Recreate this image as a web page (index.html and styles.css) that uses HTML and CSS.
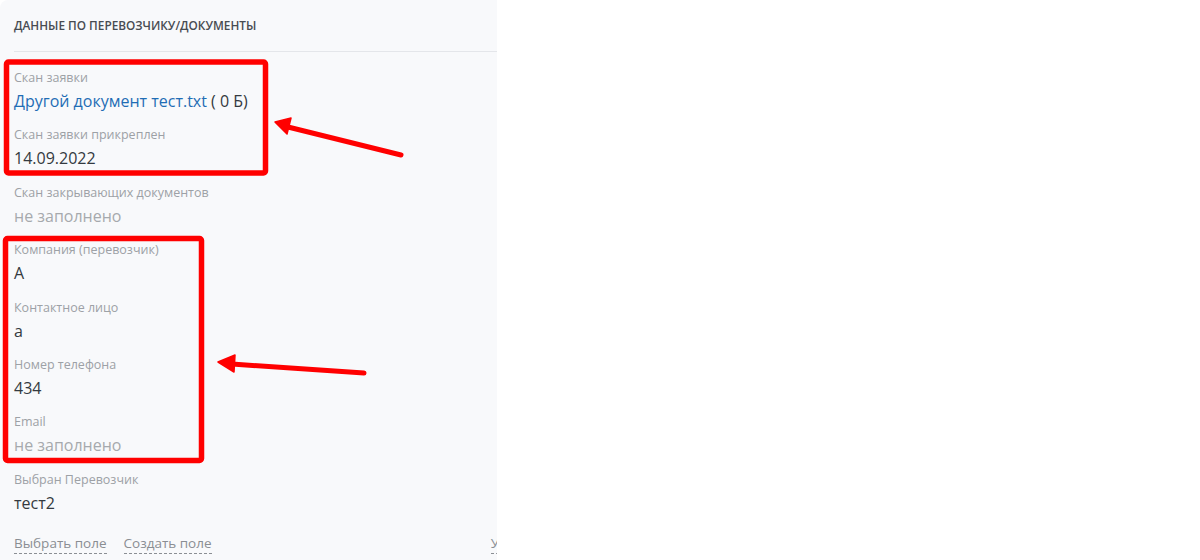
FILE: index.html
```html
<!DOCTYPE html>
<html>
<head>
	<meta charset="UTF-8">
	<title>Данные по перевозчику</title>
	<link rel="stylesheet" href="styles.css">
</head>
<body>
<div class="panel">
	<div class="header">Данные по перевозчику/документы</div>
	<div class="fields">
		<div class="field">
			<div class="label">Скан заявки</div>
			<div class="value"><a class="file">Другой документ тест.txt</a> ( 0 Б)</div>
		</div>
		<div class="field">
			<div class="label">Скан заявки прикреплен</div>
			<div class="value">14.09.2022</div>
		</div>
		<div class="field">
			<div class="label">Скан закрывающих документов</div>
			<div class="value empty">не заполнено</div>
		</div>
		<div class="field">
			<div class="label">Компания (перевозчик)</div>
			<div class="value">А</div>
		</div>
		<div class="field">
			<div class="label">Контактное лицо</div>
			<div class="value">а</div>
		</div>
		<div class="field">
			<div class="label">Номер телефона</div>
			<div class="value">434</div>
		</div>
		<div class="field">
			<div class="label">Email</div>
			<div class="value empty">не заполнено</div>
		</div>
		<div class="field">
			<div class="label">Выбран Перевозчик</div>
			<div class="value">тест2</div>
		</div>
	</div>
	<div class="actions">
		<a class="action">Выбрать поле</a>
		<a class="action">Создать поле</a>
		<a class="action right">Удалить</a>
	</div>
</div>
<svg class="marks" width="1200" height="560" viewBox="0 0 1200 560">
	<g fill="none" stroke="#ff0000" stroke-width="5.5">
		<rect x="6.5" y="62" width="259" height="111" rx="2"/>
		<rect x="5.5" y="238.5" width="196" height="222" rx="2"/>
	</g>
	<g stroke="#ff0000" stroke-width="5" stroke-linecap="round" fill="#ff0000">
		<line x1="401" y1="155" x2="288" y2="127"/>
		<polygon points="275,122 291,118 287,134" stroke-width="1.5" stroke-linejoin="round"/>
		<line x1="364" y1="373" x2="232" y2="364"/>
		<polygon points="218,362 235,355 234,372" stroke-width="1.5" stroke-linejoin="round"/>
	</g>
</svg>
</body>
</html>
```

FILE: styles.css
```css
body {
	margin: 0;
	background-color: #FFF;
	font-family: "Open Sans", "Noto Sans", sans-serif;
	color: #333;
}
.panel {
	width: 497px;
	height: 560px;
	overflow: hidden;
	background-color: #F8F9FB;
	border-top-left-radius: 8px;
	box-sizing: border-box;
}
.header {
	margin-left: 14px;
	padding: 17px 0 17px;
	border-bottom: 1px solid #E4E6EA;
	font-size: 11.8px;
	font-weight: 600;
	line-height: 17px;
	text-transform: uppercase;
	color: #484C52;
}
.fields {
	padding: 17px 14px 0;
}
.field {
	margin-bottom: 13.4px;
}
.label {
	font-size: 12.5px;
	line-height: 18px;
	color: #9DA1A6;
}
.value {
	padding-top: 2px;
	font-size: 16px;
	line-height: 24px;
	color: #343A40;
}
.value.empty {
	color: #A6A9AD;
}
.file {
	color: #1F6DB5;
	cursor: pointer;
}
.actions {
	display: flex;
	gap: 17px;
	padding: 5px 14px 0;
	font-size: 13.5px;
	line-height: 20px;
	white-space: nowrap;
}
.action {
	color: #8A8E93;
	border-bottom: 1px dashed #8A8E93;
	cursor: pointer;
}
.action.right {
	margin-left: auto;
	margin-right: -62px;
}
.marks {
	position: absolute;
	top: 0;
	left: 0;
	pointer-events: none;
}
```
